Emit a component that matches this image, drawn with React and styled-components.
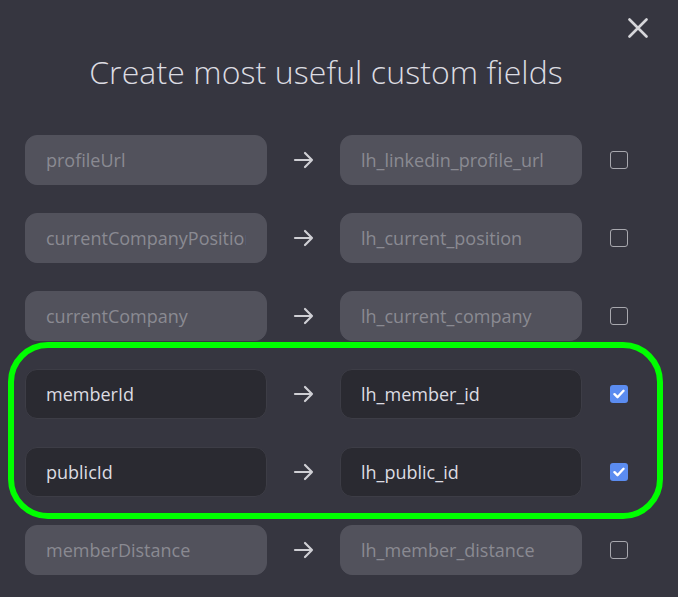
import React from 'react';
import styled, { createGlobalStyle } from 'styled-components';

const GlobalStyle = createGlobalStyle`
  html, body {
    margin: 0;
    padding: 0;
    background: #363640;
  }
  * {
    box-sizing: border-box;
  }
`;

const palette = {
  bg: '#363640',
  fieldOff: '#52525c',
  fieldOn: '#2a2a31',
  textOff: '#8a8a92',
  textOn: '#dcdce2',
  icon: '#cfcfd4',
  blue: '#5b8cf0',
  green: '#00ff00',
};

const Modal = styled.div`
  position: relative;
  width: 678px;
  height: 597px;
  overflow: hidden;
  background: ${palette.bg};
  font-family: 'Open Sans', 'Liberation Sans', sans-serif;
`;

const CloseButton = styled.button`
  position: absolute;
  top: 16px;
  right: 28px;
  width: 24px;
  height: 24px;
  padding: 0;
  border: none;
  background: transparent;
  display: flex;
  align-items: center;
  justify-content: center;
`;

const Title = styled.h1`
  margin: 0;
  padding-top: 50px;
  height: 135px;
  text-align: center;
  padding-right: 26px;
  font-size: 32px;
  font-weight: 300;
  color: #dcdce2;
  letter-spacing: 0.1px;
`;

const List = styled.div`
  display: flex;
  flex-direction: column;
  gap: 28px;
  padding-left: 25px;
`;

const Row = styled.div`
  display: grid;
  grid-template-columns: 242px 73px 242px 28px 18px;
  align-items: center;
  height: 50px;
`;

const Field = styled.div`
  grid-column: ${(p) => p.$col};
  height: 50px;
  border-radius: 12px;
  padding: 0 20px;
  display: flex;
  align-items: center;
  font-size: 18px;
  background: ${(p) => (p.$on ? palette.fieldOn : palette.fieldOff)};
  border: 1px solid ${(p) => (p.$on ? '#3d3d46' : palette.fieldOff)};
  color: ${(p) => (p.$on ? palette.textOn : palette.textOff)};
`;

const FieldText = styled.span`
  display: block;
  width: 100%;
  overflow: hidden;
  white-space: nowrap;
`;

const Arrow = styled.div`
  display: flex;
  justify-content: center;
  padding-left: 1px;
`;

const Check = styled.div`
  grid-column: 5;
  width: 18px;
  height: 18px;
  border-radius: 3px;
  display: flex;
  align-items: center;
  justify-content: center;
  border: ${(p) => (p.$on ? 'none' : '1.5px solid #a8a8ae')};
  background: ${(p) => (p.$on ? palette.blue : 'transparent')};
`;

const Highlight = styled.div`
  position: absolute;
  left: 8px;
  top: 342px;
  width: 655px;
  height: 177px;
  border: 6px solid ${palette.green};
  border-radius: 40px;
  pointer-events: none;
`;

const fields = [
  { from: 'profileUrl', to: 'lh_linkedin_profile_url', on: false },
  { from: 'currentCompanyPosition', to: 'lh_current_position', on: false },
  { from: 'currentCompany', to: 'lh_current_company', on: false },
  { from: 'memberId', to: 'lh_member_id', on: true },
  { from: 'publicId', to: 'lh_public_id', on: true },
  { from: 'memberDistance', to: 'lh_member_distance', on: false },
];

const ArrowIcon = () => (
  <svg width="22" height="22" viewBox="0 0 22 22" fill="none" stroke={palette.icon} strokeWidth="2.2" strokeLinecap="round" strokeLinejoin="round">
    <path d="M2 11h17M12 4l7 7-7 7" />
  </svg>
);

const CheckMark = () => (
  <svg width="12" height="10" viewBox="0 0 12 10" fill="none" stroke="#fff" strokeWidth="2.4" strokeLinecap="round" strokeLinejoin="round">
    <path d="M1.5 5.2l3 3 6-6.4" />
  </svg>
);

const App = () => {
  return (
    <>
      <GlobalStyle />
      <Modal>
        <CloseButton aria-label="close">
          <svg width="20" height="20" viewBox="0 0 20 20" stroke="#d6d6da" strokeWidth="2.6" strokeLinecap="round">
            <path d="M1.5 1.5l17 17M18.5 1.5l-17 17" />
          </svg>
        </CloseButton>
        <Title>Create most useful custom fields</Title>
        <List>
          {fields.map((f) => (
            <Row key={f.from}>
              <Field $col={1} $on={f.on}><FieldText>{f.from}</FieldText></Field>
              <Arrow><ArrowIcon /></Arrow>
              <Field $col={3} $on={f.on}><FieldText>{f.to}</FieldText></Field>
              <Check $on={f.on}>{f.on && <CheckMark />}</Check>
            </Row>
          ))}
        </List>
        <Highlight />
      </Modal>
    </>
  );
};

export default App;
